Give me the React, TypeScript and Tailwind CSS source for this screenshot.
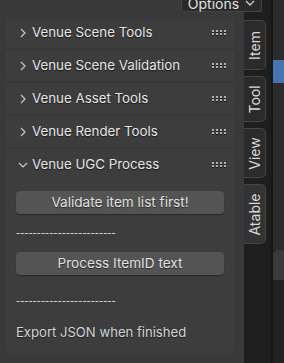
import React from 'react';

const font = { fontFamily: 'Inter, "DejaVu Sans", sans-serif' };

const Grip = () => (
  <div className="grid grid-cols-4 gap-x-[2px] gap-y-[1px]">
    {Array.from({ length: 8 }).map((_, i) => (
      <span key={i} className="w-[2px] h-[2px] bg-[#b4b4b4] shadow-[0_1px_0_#1a1a1a]"></span>
    ))}
  </div>
);

const Chevron = ({ open }: { open?: boolean }) => (
  <svg width="10" height="10" viewBox="0 0 10 10" className="shrink-0">
    {open ? (
      <path d="M1 3 L5 7 L9 3" fill="none" stroke="#c8c8c8" strokeWidth="1.2" />
    ) : (
      <path d="M3 1 L7 5 L3 9" fill="none" stroke="#c8c8c8" strokeWidth="1.2" />
    )}
  </svg>
);

const Header = ({ title, open }: { title: string; open?: boolean }) => (
  <div className="h-[31px] flex items-center pl-[13px] pr-[9px]">
    <Chevron open={open} />
    <span className="ml-[4px] text-[13.3px] text-[#e6e6e6] [text-shadow:0_1px_1px_rgba(0,0,0,0.6)] flex-1">
      {title}
    </span>
    <Grip />
  </div>
);

const Button = ({ label }: { label: string }) => (
  <div className="h-[23px] rounded-[4px] bg-[#545454] shadow-[0_1px_1px_rgba(0,0,0,0.35)] flex items-center justify-center text-[13.6px] text-[#e0e0e0] [text-shadow:0_1px_1px_rgba(0,0,0,0.5)]">
    {label}
  </div>
);

const Dashes = ({ className }: { className: string }) => (
  <div
    className={`${className} h-[16px] text-[11.5px] leading-[16px] text-[#cfcfcf]`}
    style={{ fontFamily: '"DejaVu Sans", sans-serif' }}
  >
    ------------------------
  </div>
);

export default function App() {
  const closed = ['Venue Scene Tools', 'Venue Scene Validation', 'Venue Asset Tools', 'Venue Render Tools'];
  const tabs = [
    { label: 'Item', h: 'h-[50px]' },
    { label: 'Tool', h: 'h-[46px]' },
    { label: 'View', h: 'h-[50px]' },
    { label: 'Atable', h: 'h-[60px]' },
  ];

  return (
    <div className="w-[284px] h-[363px] relative overflow-hidden bg-[#393939] flex" style={font}>
      {/* sidebar panels */}
      <div className="w-[244px] shrink-0 pt-[17px] pl-[5px] pr-[9px] flex flex-col gap-[2px]">
        {closed.map((t) => (
          <div key={t} className="rounded-[4px] bg-[#3d3d3d]">
            <Header title={t} />
          </div>
        ))}
        <div className="rounded-[4px] bg-[#3d3d3d] pb-[10px]">
          <Header title="Venue UGC Process" open />
          <div className="px-[11px] pt-[11px] flex flex-col">
            <Button label="Validate item list first!" />
            <Dashes className="mt-[11px]" />
            <div className="mt-[11px]">
              <Button label="Process ItemID text" />
            </div>
            <Dashes className="mt-[18px]" />
            <div className="mt-[14px] text-[13.1px] text-[#d4d4d4] [text-shadow:0_1px_1px_rgba(0,0,0,0.5)]">
              Export JSON when finished
            </div>
          </div>
        </div>
      </div>

      {/* tab strip */}
      <div className="w-[27px] shrink-0 flex flex-col">
        <div className="h-[12px] bg-[#393939]"></div>
        <div className="flex-1 bg-[#1e1e1e] pt-[8px] pr-[5px] flex flex-col gap-[6px]">
          {tabs.map((t, i) => (
            <div
              key={t.label}
              className={`${t.h} rounded-r-[5px] border border-l-0 border-[#454545] ${i === 3 ? 'bg-[#333333]' : 'bg-[#2b2b2b]'} flex items-center justify-center`}
            >
              <span className="-rotate-90 whitespace-nowrap text-[14px] text-[#d8d8d8]">{t.label}</span>
            </div>
          ))}
        </div>
      </div>

      {/* separator + properties editor */}
      <div className="w-[2px] shrink-0 bg-[#161616]"></div>
      <div className="flex-1 bg-[#2b2b2b] flex flex-col">
        <div className="h-[60px]"></div>
        <div className="h-[23px] bg-[#4772b3]"></div>
        <div className="h-[167px]"></div>
        <div className="h-[30px] rounded-tl-[5px] bg-[#3a3a3a]"></div>
        <div className="flex-1 bg-[#222222]"></div>
      </div>

      {/* header dropdown */}
      <div className="absolute left-[181px] top-[-6px] w-[81px] h-[18px] rounded-[4px] bg-[#2a2a2a] border border-[#444] flex items-center justify-center gap-[6px] text-[14px] text-[#e0e0e0]">
        <span>Options</span>
        <svg width="10" height="8" viewBox="0 0 10 8">
          <path d="M1 2 L5 6 L9 2" fill="none" stroke="#d0d0d0" strokeWidth="1.3" />
        </svg>
      </div>
      <div className="absolute left-[262px] top-0 w-[9px] h-[12px] bg-[#1e1e1e]"></div>
    </div>
  );
}
